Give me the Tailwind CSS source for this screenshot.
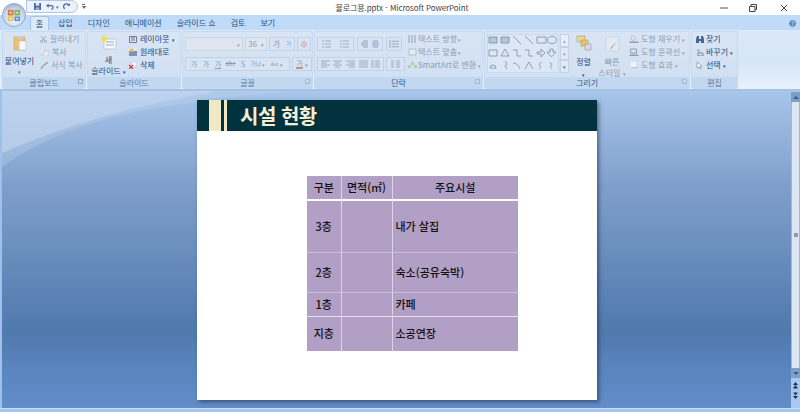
<!DOCTYPE html>
<html lang="ko">
<head>
<meta charset="UTF-8">
<title>블로그용.pptx - Microsoft PowerPoint</title>
<script src="https://cdn.jsdelivr.net/npm/@tailwindcss/browser@4"></script>
</head>
<body class="w-[800px] h-[412px] overflow-hidden relative bg-[#6c93c6] font-['Noto_Sans_CJK_KR','Noto_Sans',sans-serif] text-[8px] leading-none">

<!-- Title bar -->
<div class="h-[15px] bg-white relative flex items-center justify-center">
  <span class="text-[8px] text-[#444] ml-[4px] tracking-[-0.1px]">블로그용.pptx - Microsoft PowerPoint</span>
  <div class="absolute right-0 top-0 flex h-[15px] items-center">
    <svg class="w-[8px] h-[8px] mr-[21px]" viewBox="0 0 8 8"><path d="M0 4h8" stroke="#555" stroke-width="1"/></svg>
    <svg class="w-[8px] h-[8px] mr-[23px]" viewBox="0 0 8 8" fill="none" stroke="#444"><path d="M.5 2.500h5.500v5h-5.500z"/><path d="M2 2V.5h5.500v5H6"/></svg>
    <svg class="w-[8px] h-[8px] mr-[12px]" viewBox="0 0 8 8"><path d="M1 1l6 6M7 1l-6 6" stroke="#444"/></svg>
  </div>
</div>

<!-- Quick access -->
<div class="absolute left-[26px] top-0 w-[52px] h-[13px] rounded-r-full border border-[#b4c6de] bg-[#eaf2fb] flex items-center pl-[7px]">
  <svg class="w-[7px] h-[7px]" viewBox="0 0 8 8"><path d="M0 0h8v8H0z" fill="#4a6aa0"/><path d="M2 0h4v3H2z" fill="#dfe8f5"/><path d="M2 5h4v3H2z" fill="#9fb4d3"/></svg>
  <svg class="w-[8px] h-[7px] ml-[5px]" viewBox="0 0 9 8" fill="none"><path d="M2 3h4a2 2 0 010 4" stroke="#4a6aa0" stroke-width="1.500"/><path d="M0 3l3-2.500v5z" fill="#4a6aa0"/></svg>
  <span class="text-[5px] text-[#567] ml-[2px]">▾</span>
  <svg class="w-[7px] h-[7px] ml-[4px]" viewBox="0 0 8 8" fill="none"><path d="M6.500 3A3 3 0 102 6.500" stroke="#4a6aa0" stroke-width="1.500"/><path d="M5 3h3V0z" fill="#4a6aa0"/></svg>
</div>
<div class="absolute left-[82px] top-[4px] w-[3px] h-[6px] flex flex-col items-center gap-[1px]"><div class="w-[3px] h-px bg-[#666]"></div><div class="w-0 h-0 border-x-[2px] border-x-transparent border-t-[3px] border-t-[#666]"></div></div>

<!-- Office button -->
<div class="absolute left-[2px] top-[3px] w-[24px] h-[24px] rounded-full z-10 bg-[radial-gradient(circle_at_50%_75%,#e6f3ff,#c3d5ea_60%,#8a9db8)] border border-[#94a8c4] flex items-center justify-center">
  <svg class="w-[14px] h-[14px]" viewBox="0 0 15 15">
    <path d="M1 2h6v6H1z" fill="#dd7a48"/><path d="M8 2h6v6H8z" fill="#85b55f"/><path d="M1 9h6v5H1z" fill="#eabf52"/><path d="M8 9h6v5H8z" fill="#5f90cf"/>
    <path d="M3 4h2v2H3zM10 4h2v2h-2zM3 10.500h2v2H3zM10 10.500h2v2h-2z" fill="#fff" opacity=".8"/>
  </svg>
</div>

<!-- Tabs -->
<div class="h-[15px] bg-[#bfdbf7] flex items-end pl-[30px] text-[8px] text-[#2b5288]">
  <div class="w-[19px] h-[14px] bg-[#dceafa] border border-b-0 border-[#a7c3e3] rounded-t-[2px] flex items-center justify-center">홈</div>
  <div class="h-[14px] flex items-center ml-[9px]">삽입</div>
  <div class="h-[14px] flex items-center ml-[15px]">디자인</div>
  <div class="h-[14px] flex items-center ml-[15px]">애니메이션</div>
  <div class="h-[14px] flex items-center ml-[15px]">슬라이드 쇼</div>
  <div class="h-[14px] flex items-center ml-[15px]">검토</div>
  <div class="h-[14px] flex items-center ml-[15px]">보기</div>
  <div class="ml-auto mr-[3px] mb-[2px] w-[9px] h-[9px] rounded-full bg-[#5a87c5] border border-[#dbe8f7] flex items-center justify-center text-white text-[6px]">?</div>
</div>

<!-- Ribbon -->
<div class="h-[61px] border-b-2 border-[#a5c2e2] bg-gradient-to-b from-[#dbe8f8] via-[#d6e6f7] to-[#e6f2fc] flex pl-[2px] pt-px text-[#8c9db3]">

  <!-- Clipboard -->
  <div class="w-[84px] h-[58px] mr-px rounded-[2px] border border-[#c7d9ee] bg-gradient-to-b from-[#d9e5f4] to-[#cfdff2] flex flex-col">
    <div class="flex-1 flex">
      <div class="w-[33px] flex flex-col items-center pt-[3px] text-[#2a4a78]">
        <svg class="w-[16px] h-[16px]" viewBox="0 0 16 16"><path d="M2 2h11v13H2z" fill="#e9c27a" stroke="#c49c56" stroke-width=".5"/><path d="M5 1h5v3H5z" fill="#c9cfd6"/><path d="M7 6h7v9H7z" fill="#f6f8fb" stroke="#a6b3c3" stroke-width=".5"/></svg>
        <span class="mt-[6px]">붙여넣기</span>
        <span class="mt-[4px] text-[5px] text-[#678]">▾</span>
      </div>
      <div class="flex flex-col pt-[3px] gap-[5px] ml-[4px]">
        <div class="flex items-center gap-[3px]"><svg class="w-[7px] h-[7px]" viewBox="0 0 7 7" fill="none" stroke="#98a6b8"><path d="M1 0l4 5M6 0L2 5"/><circle cx="1.500" cy="5.500" r="1"/><circle cx="5.500" cy="5.500" r="1"/></svg>잘라내기</div>
        <div class="flex items-center gap-[3px]"><svg class="w-[9px] h-[7px]" viewBox="0 0 9 7"><path d="M0 0h5v5H0z" fill="#eef3f9" stroke="#a9b6c6" stroke-width=".5"/><path d="M3 2h6v5H3z" fill="#e4ebf4" stroke="#a9b6c6" stroke-width=".5"/></svg>복사</div>
        <div class="flex items-center gap-[3px]"><svg class="w-[8px] h-[7px]" viewBox="0 0 8 7" fill="none"><path d="M8 0L3 4 1 7" stroke="#a8a694" stroke-width="1.500"/></svg>서식 복사</div>
      </div>
    </div>
    <div class="h-[11px] bg-[#c1d8f0] flex items-center justify-center text-[#5c7aa3] relative">클립보드
      <span class="absolute right-[2px] top-[2px] w-[5px] h-[5px] border border-[#8ea5c3]"></span>
    </div>
  </div>

  <!-- Slides -->
  <div class="w-[94px] h-[58px] mr-px rounded-[2px] border border-[#c7d9ee] bg-gradient-to-b from-[#d9e5f4] to-[#cfdff2] flex flex-col">
    <div class="flex-1 flex text-[#2a4a78]">
      <div class="w-[41px] flex flex-col items-center pt-[3px] whitespace-nowrap">
        <svg class="w-[16px] h-[15px]" viewBox="0 0 16 15"><path d="M3 4h12v10H3z" fill="#f6f8fb" stroke="#9aa9bb" stroke-width=".5"/><path d="M5 7h8M5 10h8" stroke="#9aa9bb"/><path d="M3 0l1 2 2-1-1 2 2 1-2 1 1 2-2-1-1 2-1-2-2 1 1-2-2-1 2-1-1-2 2 1z" fill="#f3dd55"/></svg>
        <span class="mt-[6px]">새</span>
        <span class="mt-[3px]">슬라이드 <span class="text-[5px]">▾</span></span>
      </div>
      <div class="flex flex-col pt-[3px] gap-[5px] whitespace-nowrap">
        <div class="flex items-center gap-[3px]"><svg class="w-[8px] h-[7px]" viewBox="0 0 8 7" fill="none" stroke="#6d7d95"><path d="M.5.500h7v6h-7zM2 2h4M2 4h4"/></svg>레이아웃 <span class="text-[5px]">▾</span></div>
        <div class="flex items-center gap-[3px]"><svg class="w-[8px] h-[7px]" viewBox="0 0 8 7"><path d="M0 2h8v5H0z" fill="#7b93b6"/><path d="M1 0h3v3H1z" fill="#e0b84f"/></svg>원래대로</div>
        <div class="flex items-center gap-[3px]"><svg class="w-[8px] h-[7px]" viewBox="0 0 8 7"><path d="M2 0h6v5H2z" fill="#f5f7fa" stroke="#8e9eb2" stroke-width=".5"/><path d="M0 3l4 4M4 3L0 7" stroke="#d3352b" stroke-width="1.200"/></svg>삭제</div>
      </div>
    </div>
    <div class="h-[11px] bg-[#c1d8f0] flex items-center justify-center text-[#5c7aa3]">슬라이드</div>
  </div>

  <!-- Font -->
  <div class="w-[131px] h-[58px] mr-px rounded-[2px] border border-[#c7d9ee] bg-gradient-to-b from-[#d9e5f4] to-[#cfdff2] flex flex-col">
    <div class="flex-1 flex flex-col pl-[2px] pt-[5px] gap-[6px] whitespace-nowrap">
      <div class="flex items-center gap-[2px] h-[14px]">
        <div class="w-[58px] h-[14px] bg-[#dfe6ef] border border-[#cbd6e4] flex items-center justify-end pr-[2px] text-[5px]">▾</div>
        <div class="w-[22px] h-[14px] bg-[#dfe6ef] border border-[#cbd6e4] flex items-center justify-between px-[2px]">36<span class="text-[5px]">▾</span></div>
        <div class="w-[26px] h-[14px] bg-[#d8e4f3] border border-[#c2d2e6] flex items-center justify-around"><span>가</span><span class="text-[6px]">가</span></div>
        <div class="w-[14px] h-[14px] bg-[#d8e4f3] border border-[#c2d2e6] flex items-center justify-center"><svg class="w-[8px] h-[8px]" viewBox="0 0 8 8"><path d="M1 5l3-4 3 3-2 3H3z" fill="#e7c6cf" stroke="#99a" stroke-width=".5"/></svg></div>
      </div>
      <div class="flex items-center gap-[2px] h-[14px]">
        <div class="w-[105px] h-[14px] bg-[#d8e4f3] border border-[#c2d2e6] rounded-[2px] flex items-center pl-[2px] text-[7px]">
          <span class="w-[12px] text-center">가</span><span class="w-[12px] text-center">가</span><span class="w-[12px] text-center underline">가</span><span class="w-[13px] text-center line-through text-[6px]">abc</span><span class="w-[12px] text-center">S</span><span class="w-[13px] text-center text-[6px]">가나</span><span class="w-[6px] text-[5px]">▾</span><span class="w-[12px] text-center font-['Liberation_Serif',serif]">Aa</span><span class="text-[5px]">▾</span>
        </div>
        <div class="w-[20px] h-[14px] bg-[#d8e4f3] border border-[#c2d2e6] flex items-center justify-center gap-[2px] text-[7px]"><span class="border-b-2 border-[#b09a90]">가</span><span class="text-[5px]">▾</span></div>
      </div>
    </div>
    <div class="h-[11px] bg-[#c1d8f0] flex items-center justify-center text-[#5c7aa3] relative">글꼴
      <span class="absolute right-[2px] top-[2px] w-[5px] h-[5px] border border-[#a7bad2]"></span>
    </div>
  </div>

  <!-- Paragraph -->
  <div class="w-[169px] h-[58px] mr-px rounded-[2px] border border-[#c7d9ee] bg-gradient-to-b from-[#d9e5f4] to-[#cfdff2] flex flex-col">
    <div class="flex-1 flex pl-[2px] pt-[3px]">
      <div class="w-[91px] flex flex-col gap-[6px] pt-[2px]">
        <div class="h-[14px] flex gap-[3px]">
          <div class="w-[37px] bg-[#d8e4f3] border border-[#c2d2e6] flex items-center justify-around"><svg class="w-[9px] h-[8px]" viewBox="0 0 9 8"><path d="M0 1h2M3 1h6M0 4h2M3 4h6M0 7h2M3 7h6" stroke="#9aaec8"/></svg><svg class="w-[9px] h-[8px]" viewBox="0 0 9 8"><path d="M0 1h2M3 1h6M0 4h2M3 4h6M0 7h2M3 7h6" stroke="#9aaec8"/></svg></div>
          <div class="w-[26px] bg-[#d8e4f3] border border-[#c2d2e6] flex items-center justify-center"><svg class="w-[18px] h-[8px]" viewBox="0 0 18 8"><path d="M2 1h5M0 3h7M0 5h7M2 7h5M12 1h5M11 3h7M11 5h7M12 7h5" stroke="#8fa3be"/></svg></div>
          <div class="w-[16px] bg-[#d8e4f3] border border-[#c2d2e6] flex items-center justify-center"><svg class="w-[10px] h-[8px]" viewBox="0 0 11 8"><path d="M3 1h8M3 4h8M3 7h8M1 0v8" stroke="#8fa3be"/></svg></div>
        </div>
        <div class="h-[14px] flex gap-[2px]">
          <div class="w-[67px] bg-[#d8e4f3] border border-[#c2d2e6] flex items-center justify-around px-px">
            <svg class="w-[9px] h-[8px]" viewBox="0 0 9 8"><path d="M0 1h9M0 3h6M0 5h9M0 7h6" stroke="#9aaec8"/></svg><svg class="w-[9px] h-[8px]" viewBox="0 0 9 8"><path d="M0 1h9M2 3h5M0 5h9M2 7h5" stroke="#9aaec8"/></svg><svg class="w-[9px] h-[8px]" viewBox="0 0 9 8"><path d="M0 1h9M3 3h6M0 5h9M3 7h6" stroke="#9aaec8"/></svg><svg class="w-[9px] h-[8px]" viewBox="0 0 9 8"><path d="M0 1h9M0 3h9M0 5h9M0 7h9" stroke="#9aaec8"/></svg><svg class="w-[9px] h-[8px]" viewBox="0 0 9 8"><path d="M0 1h3M4 1h5M0 3h3M4 3h5M0 5h3M4 5h5M0 7h3M4 7h5" stroke="#9aaec8"/></svg>
          </div>
          <div class="w-[19px] bg-[#d8e4f3] border border-[#c2d2e6] flex items-center justify-center"><svg class="w-[9px] h-[8px]" viewBox="0 0 9 8"><path d="M0 1h3M0 3h3M0 5h3M0 7h3M5 1h4M5 3h4M5 5h4M5 7h4" stroke="#9aaec8"/></svg></div>
        </div>
      </div>
      <div class="flex flex-col gap-[5px] whitespace-nowrap">
        <div class="flex items-center gap-[1px]"><svg class="w-[9px] h-[8px]" viewBox="0 0 9 8" fill="none" stroke="#8d9fb6"><path d="M1 0v8M4 0v8M7 0v8"/></svg>텍스트 방향 <span class="text-[5px]">▾</span></div>
        <div class="flex items-center gap-[1px]"><svg class="w-[9px] h-[8px]" viewBox="0 0 9 8"><path d="M1 1h7v6H1z" fill="#e7edf5" stroke="#9dadc2" stroke-width=".7"/></svg>텍스트 맞춤 <span class="text-[5px]">▾</span></div>
        <div class="flex items-center gap-[1px]"><svg class="w-[9px] h-[8px]" viewBox="0 0 9 8"><path d="M0 4h3v3H0zM3 1h3v3H3zM6 4h3v3H6z" fill="#b2d0b0"/></svg>SmartArt로 변환 <span class="text-[5px] ml-[1px]">▾</span></div>
      </div>
    </div>
    <div class="h-[11px] bg-[#c1d8f0] flex items-center justify-center text-[#34598c] relative">단락
      <span class="absolute right-[2px] top-[2px] w-[5px] h-[5px] border border-[#a7bad2]"></span>
    </div>
  </div>

  <!-- Drawing -->
  <div class="w-[206px] h-[58px] mr-px rounded-[2px] border border-[#c7d9ee] bg-gradient-to-b from-[#d9e5f4] to-[#cfdff2] flex flex-col">
    <div class="flex-1 flex pl-[2px] pt-[2px]">
      <div class="w-[72px] h-[39px] border border-[#c9d9ec] bg-[#dce7f5]">
        <svg class="w-[70px] h-[37px]" viewBox="0 0 70 37" fill="none" stroke="#7a8ea9" stroke-width=".8">
          <path d="M1 2h8v6H1zM13 2h8v6h-8z" fill="#b5c5da"/><path d="M25 1l8 8M37 1l8 8M49 2h9v6h-9z"/><ellipse cx="64" cy="5" rx="4.500" ry="3.500"/>
          <path d="M1 15h8v6H1zM17 14l4 7h-8zM25 15h4v6h4M37 15h4v6h4M49 17h4v-3l4 4-4 4v-3h-4zM62 14h3v3h3l-4.500 5-4.500-5h3z"/>
          <path d="M2 33a3 3 0 116 0zM17 26l2 3-2 2 2 3M25 28q5 0 7 6M37 34l4-7 4 7M53 27q-3 3-1 4t-1 3M62 27q3 3 1 4t1 3"/>
        </svg>
      </div>
      <div class="w-[9px] h-[39px] ml-px flex flex-col">
        <div class="h-[13px] bg-[#e9eef5] border border-[#c3d2e4] flex items-center justify-center text-[5px]">▴</div>
        <div class="h-[13px] bg-[#e2e9f3] border border-[#c3d2e4] flex items-center justify-center text-[5px]">▾</div>
        <div class="h-[13px] bg-[#e2e9f3] border border-[#c3d2e4] flex items-center justify-center text-[5px] text-[#567]">▾</div>
      </div>
      <div class="w-[25px] ml-[2px] flex flex-col items-center pt-[1px] text-[#2a4a78]">
        <svg class="w-[16px] h-[16px]" viewBox="0 0 16 16"><path d="M1 1h8v6H1z" fill="#ecd98c" stroke="#9a9a80" stroke-width=".6"/><path d="M5 5h7v6H5z" fill="#f0c456" stroke="#9a9a80" stroke-width=".6"/><path d="M9 9h6v6H9z" fill="#d8dce2" stroke="#8a94a0" stroke-width=".6"/></svg>
        <span class="mt-[7px]">정렬</span>
        <span class="mt-[6px] text-[5px]">▾</span>
      </div>
      <div class="w-[32px] flex flex-col items-center pt-[2px] whitespace-nowrap">
        <svg class="w-[15px] h-[16px]" viewBox="0 0 15 16"><path d="M1 1h13v14H1z" fill="#e4eaf2" stroke="#bcc9d9" stroke-width=".6"/><path d="M13 5l-6 7-2 2 1-3z" fill="#a5b1c0"/></svg>
        <span class="mt-[6px]">빠른</span>
        <span class="mt-[3px]">스타일 <span class="text-[5px]">▾</span></span>
      </div>
      <div class="flex flex-col gap-[5px] pt-px ml-px whitespace-nowrap">
        <div class="flex items-center gap-[2px]"><svg class="w-[10px] h-[8px]" viewBox="0 0 9 8"><path d="M3 0l3 3-2 3-3-3z" fill="#dfe6ef" stroke="#8d9db3" stroke-width=".5"/><path d="M0 6.500h9V8H0z" fill="#9a9a9a"/></svg>도형 채우기 <span class="text-[5px]">▾</span></div>
        <div class="flex items-center gap-[2px]"><svg class="w-[10px] h-[8px]" viewBox="0 0 9 8" fill="none"><path d="M1 1h6v4H1z" stroke="#8d9db3"/><path d="M0 6.500h9V8H0z" fill="#9a9a9a"/></svg>도형 윤곽선 <span class="text-[5px]">▾</span></div>
        <div class="flex items-center gap-[2px]"><svg class="w-[10px] h-[8px]" viewBox="0 0 9 8"><path d="M1 1h6v5H1z" fill="#eef2f7"/><path d="M2 6h6v1H2z" fill="#b4bfcd"/></svg>도형 효과 <span class="text-[5px]">▾</span></div>
      </div>
    </div>
    <div class="h-[11px] bg-[#c1d8f0] flex items-center justify-center text-[#34598c] relative">그리기
      <span class="absolute right-[2px] top-[2px] w-[5px] h-[5px] border border-[#a7bad2]"></span>
    </div>
  </div>

  <!-- Editing -->
  <div class="w-[47px] h-[58px] rounded-[2px] border border-[#c7d9ee] bg-gradient-to-b from-[#d9e5f4] to-[#cfdff2] flex flex-col text-[#2a4a78]">
    <div class="flex-1 flex flex-col pl-[4px] pt-[3px] gap-[5px] whitespace-nowrap">
      <div class="flex items-center gap-[2px]"><svg class="w-[8px] h-[7px]" viewBox="0 0 8 7"><path d="M1 0h2v7H0V3zM5 0h2l1 3v4H5zM3 3h2v2H3z" fill="#4a6590"/></svg>찾기</div>
      <div class="flex items-center gap-[2px]"><svg class="w-[8px] h-[7px]" viewBox="0 0 8 7" fill="none"><path d="M1 0h3M1 2h3" stroke="#7fb072"/><path d="M2 4h5v3H2z" stroke="#6f8bb2"/></svg>바꾸기 <span class="text-[5px]">▾</span></div>
      <div class="flex items-center gap-[2px]"><svg class="w-[8px] h-[7px]" viewBox="0 0 8 7"><path d="M1 0l5 4-2 .5L5 7 4 7 3 5 1 6z" fill="#fff" stroke="#6d7d95" stroke-width=".6"/></svg>선택 <span class="text-[5px]">▾</span></div>
    </div>
    <div class="h-[11px] bg-[#c1d8f0] flex items-center justify-center text-[#5c7aa3]">편집</div>
  </div>
</div>

<!-- Workspace -->
<div class="h-[317px] relative border-l-2 border-[#9fc0ea] overflow-hidden bg-[linear-gradient(to_bottom,#a8c5ea_0%,#7f9fcb_30%,#5079ad_76%,#5a84bd_87%,#628dc9_100%)]">
  <svg class="absolute left-0 top-0 w-[400px] h-[90px]" viewBox="0 0 400 90" preserveAspectRatio="none">
    <path d="M0 62Q90 22 215 0H0z" fill="#c7d9f1" opacity=".6"/>
    <path d="M0 76Q60 32 160 16 230 4 300 0H0z" fill="#c3d6ef" opacity=".3"/>
  </svg>

  <!-- Slide -->
  <div class="absolute left-[195px] top-[9px] w-[400px] h-[300px] bg-white shadow-[2px_2px_4px_rgba(30,50,80,0.6)] flex flex-col">
    <div class="w-full h-[31px] bg-[#03323f] flex items-stretch shrink-0">
      <div class="w-[12px] ml-[12px] bg-[#f0e9c4]"></div>
      <div class="w-[3px] ml-[3px] bg-[#f0e9c4]"></div>
      <div class="text-[20px] tracking-[-0.5px] leading-[31px] font-bold text-[#f3efd4] ml-[13px]">시설 현황</div>
    </div>
    <table class="mt-[45px] ml-[110px] w-[211px] table-fixed border-collapse bg-[#b19fc5] text-[11px] text-[#111] font-medium">
      <colgroup><col class="w-[34px]"><col class="w-[51px]"><col></colgroup>
      <tr class="h-[24px] border-b-2 border-white">
        <td class="text-center border-r border-[#dcd3e6]">구분</td>
        <td class="text-center border-r border-[#dcd3e6]">면적(㎡)</td>
        <td class="text-center">주요시설</td>
      </tr>
      <tr class="h-[52px] border-b border-[#c7bcd6]">
        <td class="text-center border-r border-[#dcd3e6]">3층</td>
        <td class="border-r border-[#dcd3e6]"></td>
        <td class="pl-[3px]">내가 살집</td>
      </tr>
      <tr class="h-[40px] border-b border-[#c7bcd6]">
        <td class="text-center border-r border-[#dcd3e6]">2층</td>
        <td class="border-r border-[#dcd3e6]"></td>
        <td class="pl-[3px]">숙소(공유숙박)</td>
      </tr>
      <tr class="h-[24px] border-b border-[#e8e2ef]">
        <td class="text-center border-r border-[#dcd3e6]">1층</td>
        <td class="border-r border-[#dcd3e6]"></td>
        <td class="pl-[3px]">카페</td>
      </tr>
      <tr class="h-[35px]">
        <td class="text-center border-r border-[#dcd3e6]">지층</td>
        <td class="border-r border-[#dcd3e6]"></td>
        <td class="pl-[3px]">소공연장</td>
      </tr>
    </table>
  </div>

  <!-- Scrollbar -->
  <div class="absolute right-0 top-0 w-[9px] h-full bg-[#a9c8ef] flex flex-col items-center pt-px">
    <div class="w-[9px] h-[10px] bg-[#7f9dc6] flex items-center justify-center"><div class="w-0 h-0 border-x-[3px] border-x-transparent border-b-[3px] border-b-[#3f5a82]"></div></div>
    <div class="w-[9px] h-[266px] bg-[#dde6f3] border-x border-[#a5b6cf] flex items-center justify-center"><div class="w-[4px] h-[4px] bg-[#8d9bb0]"></div></div>
    <div class="w-[9px] h-[10px] bg-[#7f9dc6] flex items-center justify-center"><div class="w-0 h-0 border-x-[3px] border-x-transparent border-t-[3px] border-t-[#3f5a82]"></div></div>
    <div class="mt-[4px] flex flex-col gap-[3px]">
      <svg class="w-[5px] h-[7px]" viewBox="0 0 5 7"><path d="M2.500 0L5 3H0zM2.500 3L5 6.500H0z" fill="#1f2f4c"/></svg>
      <svg class="w-[5px] h-[7px]" viewBox="0 0 5 7"><path d="M2.500 7L5 4H0zM2.500 3.500L5 .5H0z" fill="#1f2f4c"/></svg>
    </div>
  </div>
</div>

<!-- Status bar -->
<div class="h-[1px] bg-[#cfe0f5]"></div>
<div class="h-[3px] bg-[#a5c6ee]"></div>
</body>
</html>
